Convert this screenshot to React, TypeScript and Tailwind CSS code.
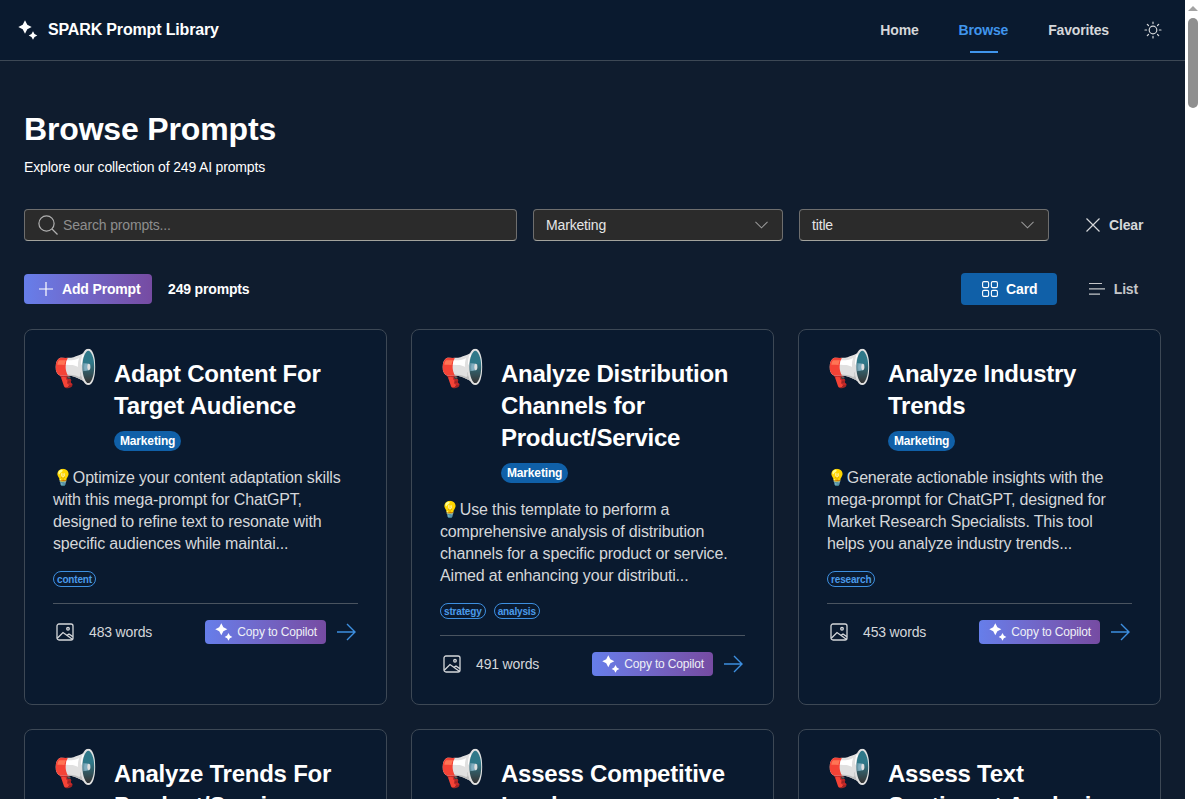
import React from 'react';

type Prompt = {
  title: string;
  description: string;
  tags: string[];
  words: number;
};

const prompts: Prompt[] = [
  {
    title: 'Adapt Content For Target Audience',
    description:
      '💡Optimize your content adaptation skills with this mega-prompt for ChatGPT, designed to refine text to resonate with specific audiences while maintai...',
    tags: ['content'],
    words: 483,
  },
  {
    title: 'Analyze Distribution Channels for Product/Service',
    description:
      '💡Use this template to perform a comprehensive analysis of distribution channels for a specific product or service. Aimed at enhancing your distributi...',
    tags: ['strategy', 'analysis'],
    words: 491,
  },
  {
    title: 'Analyze Industry Trends',
    description:
      '💡Generate actionable insights with the mega-prompt for ChatGPT, designed for Market Research Specialists. This tool helps you analyze industry trends...',
    tags: ['research'],
    words: 453,
  },
  {
    title: 'Analyze Trends For Product/Service Development',
    description:
      '💡Identify market trends and use them to guide the development of a product or service with this mega-prompt for ChatGPT and your...',
    tags: ['research'],
    words: 467,
  },
  {
    title: 'Assess Competitive Landscape',
    description:
      '💡Map out your competitors and their positioning with this template, built to help you find gaps in the market and sharpen...',
    tags: ['strategy'],
    words: 472,
  },
  {
    title: 'Assess Text Sentiment Analysis',
    description:
      '💡Evaluate the sentiment of any text with this mega-prompt for ChatGPT, designed to surface tone, emotion and intent across...',
    tags: ['analysis'],
    words: 448,
  },
];

const Sparkles = ({ className }: { className: string }) => (
  <svg viewBox="0 0 20 20" fill="currentColor" className={className}>
    <path d="M7 0.3 L9.3 4.7 L13.7 7 L9.3 9.3 L7 13.7 L4.7 9.3 L0.3 7 L4.7 4.7 Z" />
    <path d="M15 11.2 L16.5 14 L19.3 15.5 L16.5 17 L15 19.8 L13.5 17 L10.7 15.5 L13.5 14 Z" />
  </svg>
);

const SunIcon = () => (
  <svg viewBox="0 0 20 20" fill="none" stroke="currentColor" strokeWidth="1.2" strokeLinecap="round" className="w-[20px] h-[20px] text-[#d5d7da]">
    <circle cx="10" cy="10" r="3.8" />
    <path d="M10 2 V3.6 M10 16.4 V18 M2 10 H3.6 M16.4 10 H18 M4.3 4.3 L5.5 5.5 M14.5 14.5 L15.7 15.7 M4.3 15.7 L5.5 14.5 M14.5 5.5 L15.7 4.3" />
  </svg>
);

const SearchIcon = () => (
  <svg viewBox="0 0 20 20" fill="none" stroke="currentColor" strokeWidth="1.2" className="w-[20px] h-[20px] text-[#b0b0b0]">
    <circle cx="8.5" cy="8.5" r="7.6" />
    <path d="M14 14 L19.5 19.5" />
  </svg>
);

const Chevron = () => (
  <svg viewBox="0 0 14 8" fill="none" stroke="currentColor" strokeWidth="1.1" className="ml-auto w-[13px] h-[8px] text-[#999999]">
    <path d="M0.5 0.7 L7 7 L13.5 0.7" />
  </svg>
);

const CloseIcon = () => (
  <svg viewBox="0 0 14 14" fill="none" stroke="currentColor" strokeWidth="1.2" className="w-[14px] h-[14px]">
    <path d="M0.5 0.5 L13.5 13.5 M13.5 0.5 L0.5 13.5" />
  </svg>
);

const PlusIcon = () => (
  <svg viewBox="0 0 14 14" fill="none" stroke="currentColor" strokeWidth="1.2" className="w-[14px] h-[14px]">
    <path d="M7 0 V14 M0 7 H14" />
  </svg>
);

const ImageIcon = () => (
  <svg viewBox="0 0 20 20" fill="none" stroke="currentColor" strokeWidth="1.3" className="w-[20px] h-[20px] text-[#d5d7da]">
    <rect x="2" y="2" width="16" height="16" rx="2" />
    <circle cx="13" cy="6.8" r="1.3" />
    <path d="M2.3 16.2 L8 10.5 L17.7 17.6" />
    <path d="M12 13.4 L14 12 L17.8 14.6" />
  </svg>
);

const GridIcon = () => (
  <svg viewBox="0 0 16 16" fill="none" stroke="currentColor" strokeWidth="1.1" className="w-[16px] h-[16px]">
    <rect x="0.6" y="0.6" width="6" height="6" rx="1.3" />
    <rect x="9.4" y="0.6" width="6" height="6" rx="1.3" />
    <rect x="0.6" y="9.4" width="6" height="6" rx="1.3" />
    <rect x="9.4" y="9.4" width="6" height="6" rx="1.3" />
  </svg>
);

const ListIcon = () => (
  <svg viewBox="0 0 16 14" fill="none" stroke="currentColor" strokeWidth="1.2" className="w-[16px] h-[14px]">
    <path d="M0 1.5 H13 M0 6.8 H16 M0 12.2 H11" />
  </svg>
);

const ArrowIcon = () => (
  <svg viewBox="0 0 20 18" fill="none" stroke="currentColor" strokeWidth="1.4" className="w-[20px] h-[18px] text-[#3d8fe0]">
    <path d="M1 9 H18.5 M11 1 L19 9 L11 17" />
  </svg>
);

const PromptCard = ({ prompt }: { prompt: Prompt }) => (
  <div className="border border-[#3d4855] rounded-[8px] bg-[#0a1a2f] p-[28px]">
    <div className="flex items-start">
      <span className="text-[36px] leading-[48px] -mt-[13px] w-[61px] shrink-0">📢</span>
      <div>
        <h2 className="text-[24px] leading-[32px] font-bold text-white tracking-[-0.24px]">{prompt.title}</h2>
        <span className="inline-block mt-[9px] px-[6px] h-[20px] leading-[20px] rounded-full bg-[#1060a8] text-white text-[12px] font-bold align-top">
          Marketing
        </span>
      </div>
    </div>
    <p className="mt-[16px] text-[16px] leading-[22px] text-[#d5d7da]">{prompt.description}</p>
    <div className="flex gap-[8px] mt-[16px]">
      {prompt.tags.map((tag) => (
        <span
          key={tag}
          className="h-[16px] leading-[15px] px-[3px] rounded-full border border-[#3d8fe0] text-[#4a9bea] text-[10px] font-bold"
        >
          {tag}
        </span>
      ))}
    </div>
    <div className="border-t border-[#4a5460] mt-[16px] pt-[16px] flex items-center h-[24px] box-content">
      <div className="pl-[2px]">
        <ImageIcon />
      </div>
      <span className="ml-[14px] text-[14px] text-[#d5d7da]">{prompt.words} words</span>
      <div className="ml-auto flex items-center gap-[10px] pr-[2px]">
        <button className="flex items-center h-[24px] pl-[10px] pr-[9px] rounded-[4px] bg-gradient-to-r from-[#667eea] to-[#764ba2] text-[#eef0f6] text-[12px]">
          <Sparkles className="w-[18px] h-[18px] mr-[4px] text-white" />
          Copy to Copilot
        </button>
        <ArrowIcon />
      </div>
    </div>
  </div>
);

const App: React.FC = () => {
  return (
    <div className="h-screen overflow-hidden flex bg-white [font-family:'Liberation_Sans',Arial,sans-serif] tracking-[-0.16px] text-white">
      <div className="flex-1 min-w-0 overflow-hidden bg-[#0f1c2e]">
        <header className="h-[61px] border-b border-[#3d4855] bg-[#0a1a2f] flex items-center pl-[18px] pr-[22px]">
          <Sparkles className="w-[20px] h-[20px] text-white" />
          <span className="ml-[10px] text-[16px] font-bold">SPARK Prompt Library</span>
          <nav className="ml-auto flex items-center h-full text-[14px] font-bold text-[#d5d7da]">
            <a className="px-[20px]">Home</a>
            <a className="relative px-[20px] text-[#4095ec] h-full flex items-center">
              Browse
              <span className="absolute bottom-[7px] left-[31px] w-[28px] h-[2px] bg-[#4095ec]" />
            </a>
            <a className="px-[20px]">Favorites</a>
            <div className="ml-[14px]">
              <SunIcon />
            </div>
          </nav>
        </header>

        <main className="px-[24px] pt-[48px]">
          <h1 className="text-[32px] leading-[40px] font-bold">Browse Prompts</h1>
          <p className="mt-[8px] text-[14px] leading-[20px] text-white">Explore our collection of 249 AI prompts</p>

          <div className="flex items-center mt-[32px]">
            <div className="w-[493px] h-[32px] rounded-[4px] border border-[#6e6e6e] border-b-[#a3a39d] bg-[#2b2b2b] flex items-center pl-[13px]">
              <SearchIcon />
              <span className="ml-[5px] text-[14px] text-[#8e8e8e]">Search prompts...</span>
            </div>
            <div className="ml-[16px] w-[250px] h-[32px] rounded-[4px] border border-[#6e6e6e] border-b-[#a3a39d] bg-[#2b2b2b] flex items-center px-[12px] pr-[14px] text-[14px] text-[#e6e6e6]">
              Marketing
              <Chevron />
            </div>
            <div className="ml-[16px] w-[250px] h-[32px] rounded-[4px] border border-[#6e6e6e] border-b-[#a3a39d] bg-[#2b2b2b] flex items-center px-[12px] pr-[14px] text-[14px] text-[#e6e6e6]">
              title
              <Chevron />
            </div>
            <button className="ml-[37px] flex items-center text-[14px] font-bold text-[#d5d7da]">
              <CloseIcon />
              <span className="ml-[9px]">Clear</span>
            </button>
          </div>

          <div className="flex items-center mt-[32px] h-[32px]">
            <button className="flex items-center h-[30px] w-[128px] pl-[15px] rounded-[4px] bg-gradient-to-r from-[#667eea] to-[#764ba2] text-[14px] font-bold">
              <PlusIcon />
              <span className="ml-[9px]">Add Prompt</span>
            </button>
            <span className="ml-[16px] text-[14px] font-bold">249 prompts</span>
            <button className="ml-auto flex items-center justify-center gap-[8px] w-[96px] h-[32px] pl-[2px] rounded-[4px] bg-[#1060a8] text-[14px] font-bold">
              <GridIcon />
              Card
            </button>
            <button className="ml-[32px] mr-[23px] flex items-center gap-[9px] text-[14px] font-bold text-[#c4c6c9]">
              <ListIcon />
              List
            </button>
          </div>

          <div className="grid grid-cols-3 gap-[24px] mt-[24px]">
            {prompts.map((prompt) => (
              <PromptCard key={prompt.title} prompt={prompt} />
            ))}
          </div>
        </main>
      </div>

      {/* page scrollbar */}
      <div className="w-[15px] shrink-0 bg-white flex flex-col items-center">
        <div className="mt-[6px] w-0 h-0 border-l-[5px] border-r-[5px] border-b-[5px] border-l-transparent border-r-transparent border-b-[#a3a3a3]" />
        <div className="mt-[7px] w-[10px] h-[90px] rounded-full bg-[#8f8f8f]" />
      </div>
    </div>
  );
};

export default App;
